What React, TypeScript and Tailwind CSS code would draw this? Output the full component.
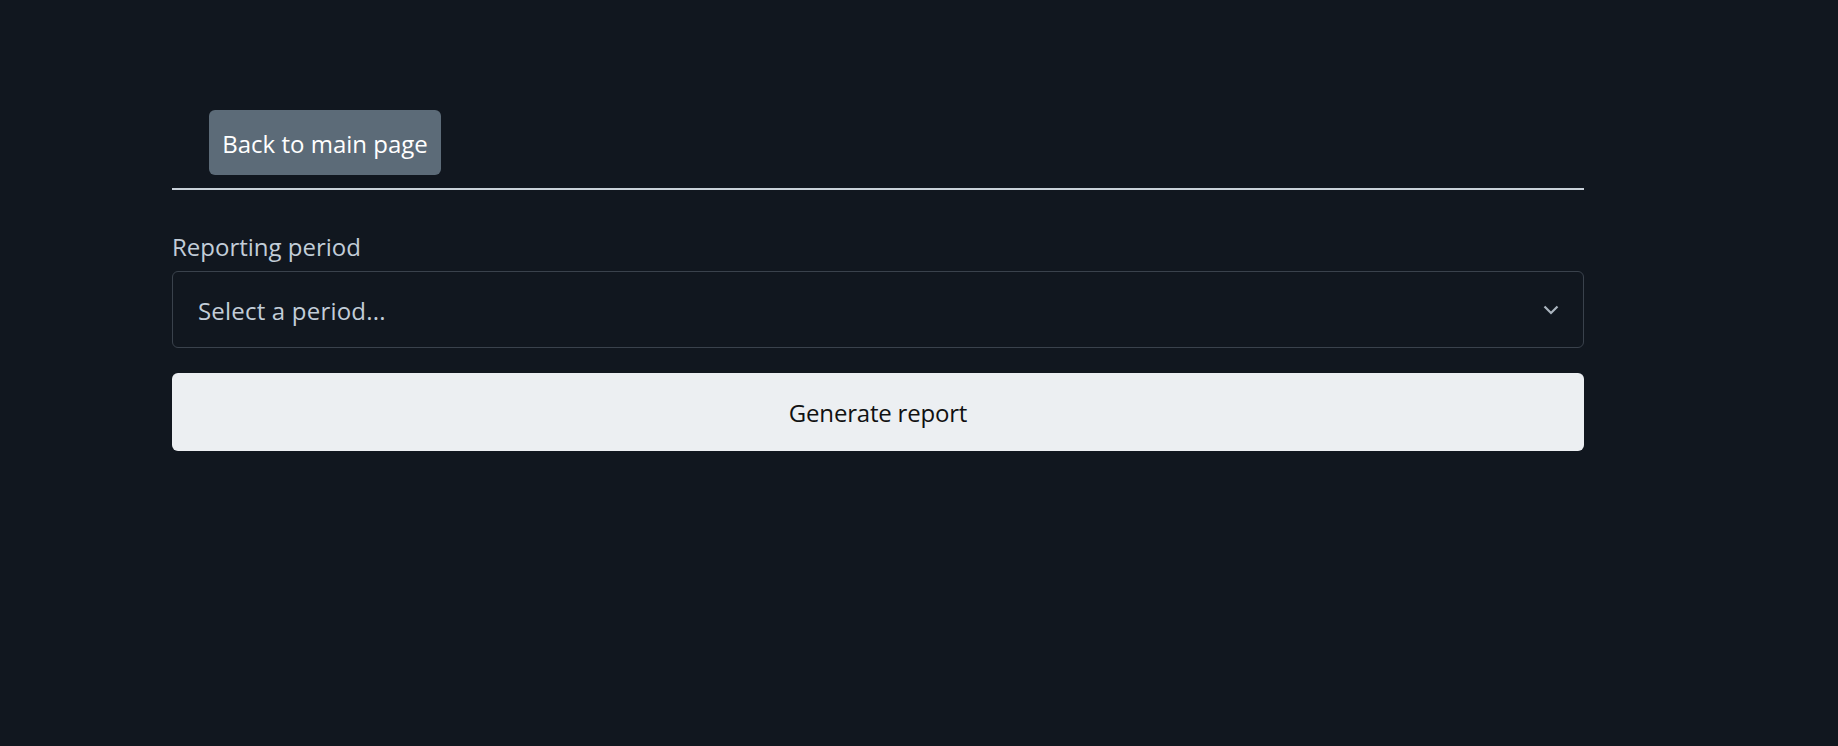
const App = () => {
  return (
    <div className="min-h-screen bg-[#11171f] font-['Open_Sans',sans-serif] text-[24px]">
      <div className="ml-[172px] w-[1412px] pt-[110px]">
        <div className="pl-[37px] pb-[13px]">
          <button className="h-[65px] w-[232px] rounded-[6px] bg-[#5c6b78] text-white leading-none pt-[2px]">
            Back to main page
          </button>
        </div>
        <hr className="border-0 h-[2px] bg-[#c9d1d9]" />

        <div className="mt-[40px]">
          <label className="block text-[#c2cdd8] leading-[34px] mb-[7px]">Reporting period</label>
          <div className="flex items-center justify-between h-[77px] rounded-[6px] border border-[#3a424c] pl-[25px] pr-[24px]">
            <span className="text-[#c2cdd8] pt-[3px] tracking-[0.2px]">Select a period...</span>
            <svg width="16" height="10" viewBox="0 0 16 10" fill="none">
              <path d="M1.5 1.5 L8 8 L14.5 1.5" stroke="#aab4be" strokeWidth="2.2" />
            </svg>
          </div>
          <button className="mt-[25px] w-full h-[78px] rounded-[6px] bg-[#eceff2] text-[#111] leading-none pt-[2px] tracking-[-0.2px]">
            Generate report
          </button>
        </div>
      </div>
    </div>
  );
};

export default App;
